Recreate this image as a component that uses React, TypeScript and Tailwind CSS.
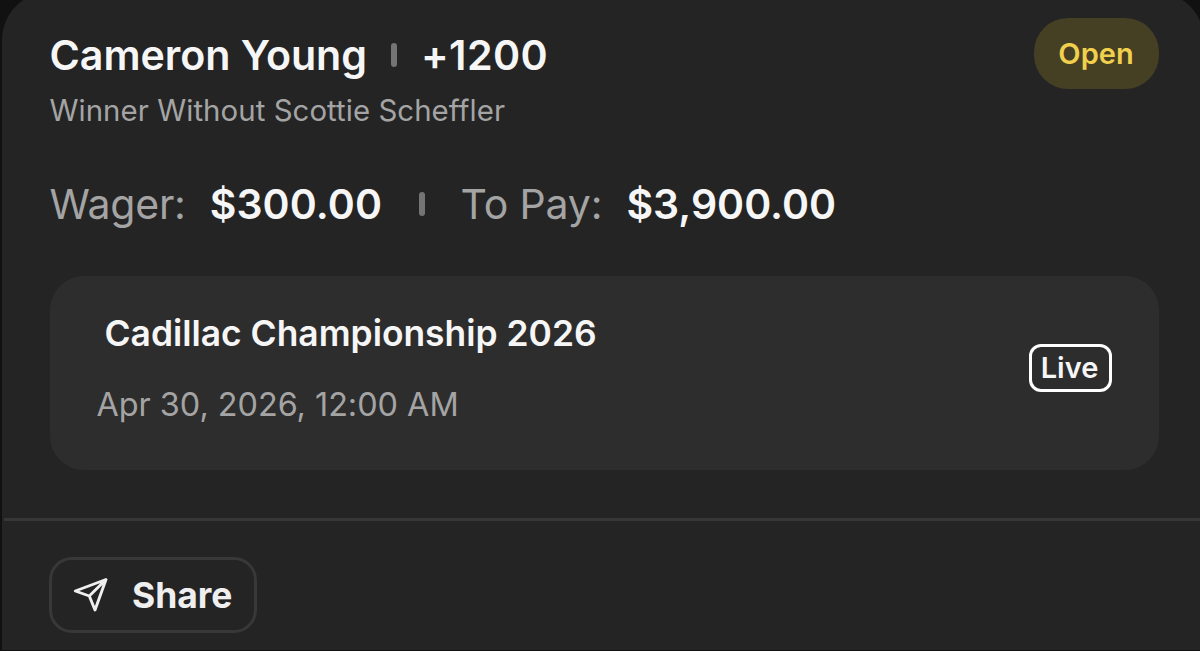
export default function App() {
  return (
    <main className="h-[651px] w-[1200px] overflow-hidden bg-[#111] font-['Inter',sans-serif] text-[#f6f6f6]">
      <section className="-mt-[8px] ml-[2px] flex h-[658px] w-[1202px] flex-col rounded-t-[48px] bg-[#242424] pt-[8px]">
        <header className="flex h-[140px] justify-between pt-[18px] pr-[45.5px] pl-[47.5px]">
          <div className="pt-[12px]">
            <h1 className="flex h-[50px] items-center text-[41.2px] font-semibold tracking-[-0.05px] whitespace-nowrap">
              <span className="pt-[2px]">Cameron Young</span>
              <span className="mr-[24px] ml-[24px] h-[24px] w-[6px] rounded-[3px] bg-[#747474]" />
              <span className="pt-[2px] tracking-[0.4px]">+1200</span>
            </h1>
            <p className="mt-[12px] text-[29.4px] leading-[38px] tracking-[0.06px] text-[#a4a4a4]">Winner Without Scottie Scheffler</p>
          </div>
          <span className="flex h-[71px] w-[125px] items-center justify-center rounded-[34px] bg-[#453f24] text-[29px] font-semibold text-[#f1d04d]">Open</span>
        </header>
        <div className="mt-[39px] ml-[47.5px] flex h-[50px] items-center text-[41px] whitespace-nowrap">
          <span className="pt-[2px] tracking-[-0.25px] text-[#a4a4a4]">Wager:</span>
          <strong className="ml-[24px] pt-[2px] font-semibold tracking-[0.1px]">$300.00</strong>
          <span className="mr-[36px] ml-[36.5px] h-[24px] w-[6px] rounded-[3px] bg-[#747474]" />
          <span className="pt-[2px] tracking-[-0.15px] text-[#a4a4a4]">To Pay:</span>
          <strong className="ml-[24px] pt-[2px] font-semibold">$3,900.00</strong>
        </div>
        <article className="mt-[47px] mr-[45.5px] ml-[47.5px] flex h-[194px] shrink-0 items-start justify-between rounded-[34px] bg-[#2d2d2d] pr-[47px] pl-[47px]">
          <div className="pt-[38px]">
            <h2 className="ml-[8px] text-[35.4px] leading-[40px] font-semibold">Cadillac Championship 2026</h2>
            <p className="mt-[31px] text-[32.4px] leading-[40px] tracking-[-0.03px] text-[#a4a4a4]">Apr 30, 2026, 12:00 AM</p>
          </div>
          <span className="mt-[68px] flex h-[48px] w-[83px] items-center justify-center rounded-[12px] border-[3px] border-white pr-px text-[29px] font-semibold">Live</span>
        </article>
        <hr className="mt-[47.5px] ml-[2px] border-t-[3px] border-[#373737]" />
        <button className="mt-[36px] ml-[47px] flex h-[76px] w-[208px] shrink-0 items-center rounded-[23px] border-[3px] border-[#383838] pl-[21px] text-[35.4px] font-bold text-[#efefef]">
          <svg className="mr-[23px] h-[36px] w-[36px]" viewBox="0 0 36 36" fill="none" stroke="currentColor" strokeWidth="2.9" strokeLinejoin="round"><path d="M33 2.5 2.3 14 16.3 19 22 33ZM16.3 19 33 2.5" /></svg>
          <span className="pt-[2px]">Share</span>
        </button>
      </section>
    </main>
  )
}
